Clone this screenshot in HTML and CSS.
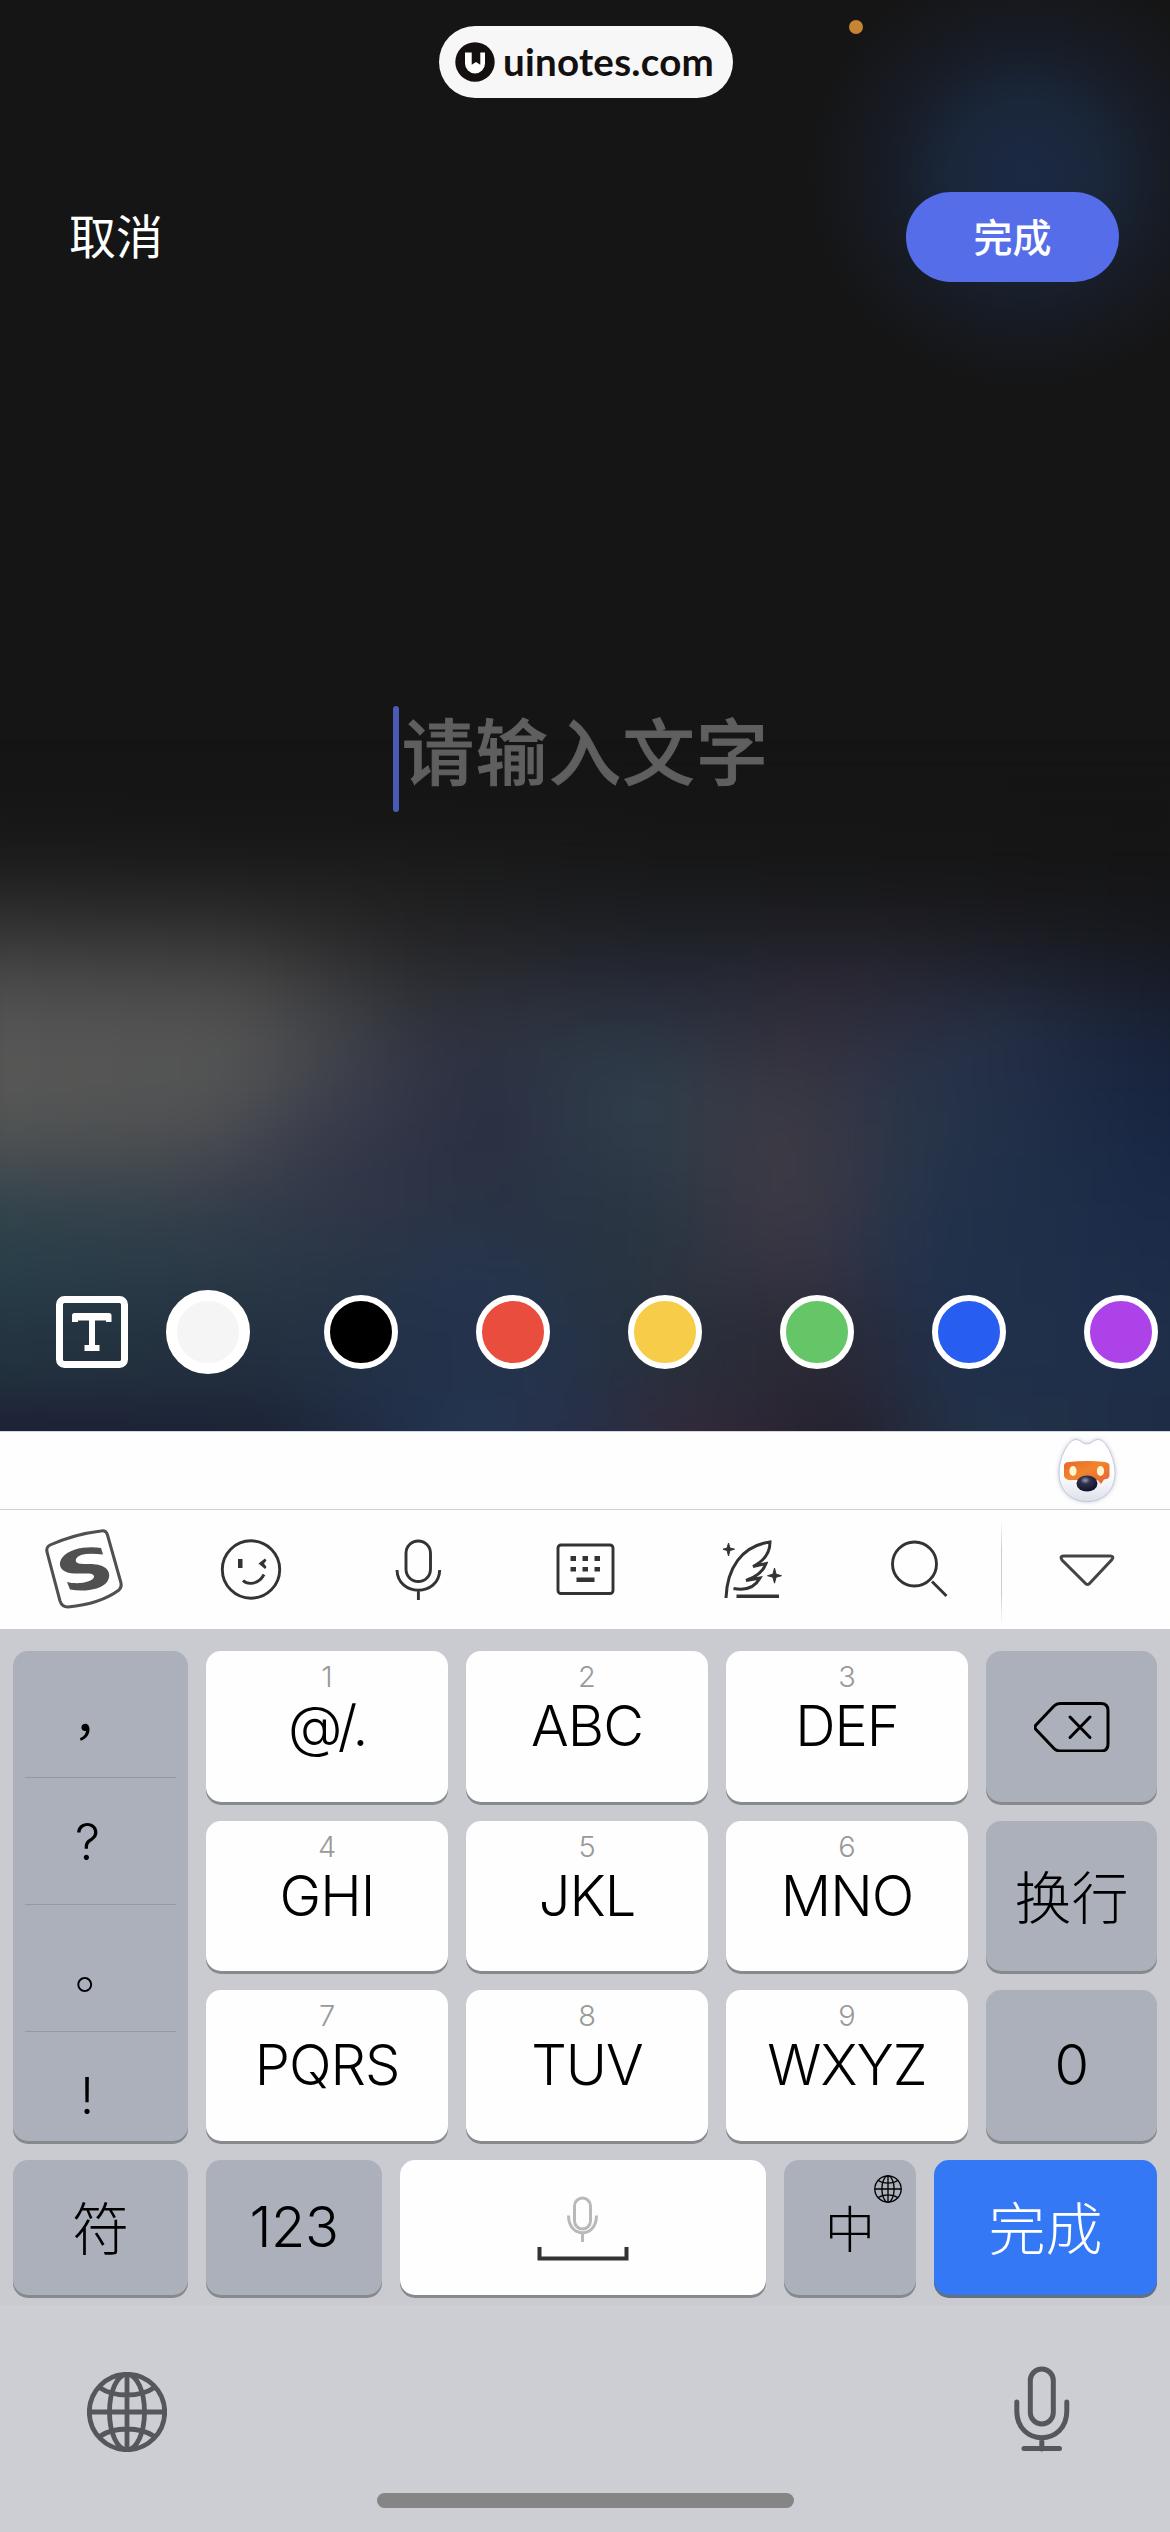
FILE: index.html
```html
<!DOCTYPE html>
<html lang="zh-CN">
<head>
<meta charset="utf-8">
<title>文字</title>
<link rel="stylesheet" href="styles.css">
</head>
<body>
<svg class="defs" width="0" height="0">
  <defs>
    <symbol id="globe" viewBox="0 0 80 80">
      <g fill="none" stroke="currentColor">
        <circle cx="40" cy="40" r="37.7"/>
        <ellipse cx="40" cy="40" rx="17.5" ry="37.7"/>
        <path d="M40 2V78M2 40H78M12.500 15.500C27 25.500 53 25.500 67.500 15.500M12.500 64.500C27 54.500 53 54.500 67.500 64.500"/>
      </g>
    </symbol>
  </defs>
</svg>
<main class="screen">
  <section class="editor">
    <div class="backdrop">
      <div class="glow"></div>
      <div class="mesh">
        <i class="m1"></i><i class="m2"></i><i class="m3"></i><i class="m4"></i><i class="m5"></i><i class="m6"></i><i class="m7"></i><i class="m8"></i><i class="m9"></i><i class="m10"></i><i class="m11"></i><i class="m12"></i>
      </div>
    </div>
    <div class="status">
      <div class="site">
        <svg width="40" height="40" viewBox="0 0 40 40"><circle cx="20" cy="20" r="19.700" fill="#14100f"/><path d="M10 10.500h6.700v12.300l4.300-2.700 4.300 2.700V10.500h4.700v11a10 10 0 0 1-20 0z" fill="#fff"/></svg>
        <span>uinotes.com</span>
      </div>
      <div class="rec-dot"></div>
    </div>
    <header class="actions">
      <span class="cancel">取消</span>
      <span class="done">完成</span>
    </header>
    <div class="field"><i class="caret"></i><span>请输入文字</span></div>
    <div class="palette">
      <svg class="tbox" width="72" height="72" viewBox="0 0 72 72"><rect x="3.500" y="3.500" width="65" height="65" rx="5" fill="none" stroke="#fff" stroke-width="7"/><path d="M18.500 17H53a2.500 2.500 0 0 1 2.500 2.500V26H50V24.500H39V49H43.500V55H28.500V49H33V24.500H22V26H16V19.500A2.500 2.500 0 0 1 18.500 17Z" fill="#fff"/></svg>
      <i class="dot white"></i><i class="dot black"></i><i class="dot red"></i><i class="dot yellow"></i><i class="dot green"></i><i class="dot blue"></i><i class="dot purple"></i>
    </div>
  </section>

  <section class="suggest">
    <svg width="66" height="72" viewBox="0 0 66 72">
      <defs>
        <linearGradient id="fur" x1="0" y1="0" x2="0" y2="1"><stop offset=".55" stop-color="#fff"/><stop offset="1" stop-color="#dde0ea"/></linearGradient>
        <linearGradient id="visor" x1="0" y1="0" x2="1" y2="1"><stop offset="0" stop-color="#e8672c"/><stop offset=".45" stop-color="#f0852e"/><stop offset="1" stop-color="#e5603a"/></linearGradient>
        <radialGradient id="nose" cx=".42" cy=".3" r=".65"><stop offset="0" stop-color="#9a9db0"/><stop offset=".35" stop-color="#30334e"/><stop offset="1" stop-color="#13142e"/></radialGradient>
      </defs>
      <path class="fox-head" d="M5 37C5 22 14 3.500 22 3.500C27 3.500 28 8 33 8S39 3.500 44 3.500C52 3.500 61 22 61 37C61 55 49 65.500 33 65.500S5 55 5 37Z" fill="url(#fur)" stroke="#c3c8da"/>
      <path d="M10 29Q11 26 15 26Q33 24 51 26Q55 27 55.500 29V40Q55 43 50 43.500L47 48L43.500 44H15Q11 43 10 40Z" fill="url(#visor)"/>
      <ellipse cx="19" cy="35" rx="3.600" ry="5" fill="#fff5d0"/><ellipse cx="46.500" cy="35" rx="3.600" ry="5" fill="#fff5d0"/>
      <ellipse cx="33" cy="47.500" rx="10.500" ry="8" fill="url(#nose)"/>
    </svg>
  </section>

  <nav class="toolbar">
    <svg class="cell" viewBox="0 0 167 119"><g fill="none" stroke="#505050" stroke-width="3"><path d="M50 35Q75 24 101 21Q106 20 107.500 25L121 73Q122 77 119 80Q100 94 68 97Q62 97 60 91L47 42Q46 37 50 35Z"/></g><path d="M101 38L103 44.500Q79 42 76 49C74 56 86 53 96 54.500C109 56 112 65 107 72C101 80 84 82 70 79.500L67 72C78 75 94 72 94 66.500C94 62 84 64 74 63.500C61 63 57 55 62 48C69 38 88 36 101 38Z" fill="#505050"/></svg>
    <svg class="cell" viewBox="0 0 167 119"><g fill="none" stroke="#333" stroke-width="2.900"><circle cx="84" cy="59.500" r="28.700"/><path d="M76 70.500C80 74.500 91 75.500 97 64.500"/></g><path d="M71 49h4.500v9H71zM98 48.500l-6.500 5 6.500 5.500 1.500-2-2.500-3.500 2.500-3z" fill="#333"/></svg>
    <svg class="cell" viewBox="0 0 167 119"><g fill="none" stroke="#333" stroke-width="2.900"><rect x="72" y="31" width="24.500" height="40.500" rx="12.250"/><path d="M63 60C63.700 87 105 87 105.700 60M84.400 81V90"/></g></svg>
    <svg class="cell" viewBox="0 0 167 119"><rect x="57" y="35" width="55" height="48.500" rx="3" fill="none" stroke="#333" stroke-width="2.900"/><path d="M69.500 46h5.500v5h-5.500zM81.500 46H87v5h-5.500zM93.500 46H99v5h-5.500zM69.500 57h5.500v4.500h-5.500zM81.500 57H87v4.500h-5.500zM93.500 57H99v4.500h-5.500zM75.500 67.500h18v4.500h-18z" fill="#333"/></svg>
    <svg class="cell" viewBox="0 0 167 119"><g fill="none" stroke="#333" stroke-width="3"><path d="M58 88C59 59 73 36 102 32C102 42 96 51 85 56.500L98 53.500C95 62 88 67 78 70.500L92 68C87 77 78 81 65.500 78.500"/><path d="M68.500 86.300H111" stroke-width="3.400"/></g><path d="M60.500 33l1.400 5 4.600 1.200-4.600 1.300-1.400 5.500-1.400-5.500L55 39.200l4.100-1.200zM106.500 58l1.600 6.200 5.400 1.500-5.400 1.500-1.600 6-1.600-6-5.400-1.500 5.400-1.500z" fill="#333" stroke="#333" stroke-width="1"/></svg>
    <svg class="cell" viewBox="0 0 167 119"><g fill="none" stroke="#333" stroke-width="2.900"><ellipse cx="79.500" cy="54" rx="22" ry="22"/><path d="M97 71.500L111.500 86"/></g></svg>
    <i class="divider"></i>
    <svg class="fold" viewBox="0 0 167 119"><path d="M61.500 46H108Q112.500 46 110 49.500L88 73Q85.500 76 83 73L60 50Q57.500 46 61.500 46Z" fill="none" stroke="#444" stroke-width="3"/></svg>
  </nav>

  <section class="keys">
    <div class="pad">
      <div class="key gray punct"><span class="comma">，</span><span>?</span><span class="stop">。</span><span>!</span></div>
      <div class="key"><small>1</small><b class="sym">@/.</b></div>
      <div class="key"><small>2</small><b>ABC</b></div>
      <div class="key"><small>3</small><b>DEF</b></div>
      <div class="key gray mid"><svg width="76" height="50" viewBox="0 0 76 50"><g fill="none" stroke="#000" stroke-width="3" stroke-linecap="round"><path d="M26 1.500H67Q74 1.500 74 8.500V42Q74 49 67 49H26Q22.500 49 20 46.500L2 27.500Q0 25.200 2 23L20 4Q22.500 1.500 26 1.500Z"/><path d="M36 15L56 35.500M56 15L36 35.500"/></g></svg></div>
      <div class="key"><small>4</small><b>GHI</b></div>
      <div class="key"><small>5</small><b>JKL</b></div>
      <div class="key"><small>6</small><b>MNO</b></div>
      <div class="key gray mid cjk">换行</div>
      <div class="key"><small>7</small><b>PQRS</b></div>
      <div class="key"><small>8</small><b>TUV</b></div>
      <div class="key"><small>9</small><b>WXYZ</b></div>
      <div class="key gray mid num">0</div>
    </div>
    <div class="last">
      <div class="key gray mid cjk">符</div>
      <div class="key gray mid num">123</div>
      <div class="key mid"><svg width="92" height="66" viewBox="0 0 92 66"><g fill="none" stroke="#b9b9b9" stroke-width="3"><rect x="37.500" y="3" width="16" height="31" rx="8"/><path d="M31.500 20.500C31.500 43.500 59.500 43.500 59.500 20.500M45.500 38V47"/></g><path d="M2.500 52V63.500H89.500V52" fill="none" stroke="#333" stroke-width="4"/></svg></div>
      <div class="key gray mid zh">中<svg class="mini" width="28" height="28"><use href="#globe"/></svg></div>
      <div class="key primary mid cjk">完成</div>
    </div>
  </section>

  <footer class="bottom">
    <div class="sys">
      <svg class="globe" width="80" height="80"><use href="#globe"/></svg>
      <svg width="56" height="86" viewBox="0 0 56 86"><g fill="none" stroke="#54575c" stroke-width="5" stroke-linecap="round"><rect x="16.300" y="3" width="23" height="55" rx="11.500"/><path d="M2.800 36V45C2.800 80.500 52.800 80.500 52.800 45V36M27.800 73V83M10 82.500H45.500"/></g></svg>
    </div>
    <div class="home"></div>
  </footer>
</main>
</body>
</html>
```
FILE: styles.css
```css
* { box-sizing: border-box; }
body { margin: 0; background: #151515; }
.defs { position: absolute; }
.screen {
  width: 1170px; height: 2532px; overflow: hidden;
  display: flex; flex-direction: column;
  font-family: Inter, "Noto Sans CJK SC", sans-serif;
}
i { display: block; font-style: normal; }
svg { display: block; }

/* Editor */
.editor { position: relative; height: 1431px; background: #151515; overflow: hidden; display: flex; flex-direction: column; isolation: isolate; }
.backdrop { position: absolute; inset: 0; z-index: -1; overflow: hidden; }
.glow { position: absolute; left: 805px; top: -40px; width: 440px; height: 430px; background: radial-gradient(closest-side, #1b2944 0, #1a2639 35%, #171b24 65%, #151515 100%); }
.mesh { position: absolute; left: -60px; top: 806px; width: 1290px; filter: blur(28px); }
.mesh i { height: 50px; }
.m1 { background: linear-gradient(90deg, #181818, #171717 40%, #151515); }
.m2 { background: linear-gradient(90deg, #212121 5%, #1f1f1f 30%, #191a1b 50%, #151517 95%); }
.m3 { background: linear-gradient(90deg, #343434 5%, #323232 22%, #232325 37%, #1e2026 55%, #1f1f26 73%, #16181d 95%); }
.m4 { background: linear-gradient(90deg, #4a4a4a 5%, #464646 23%, #2c2d31 37%, #252936 55%, #2a2834 71%, #202533 82%, #171c28 95%); }
.m5 { background: linear-gradient(90deg, #555555 5%, #525252 23%, #30333f 38%, #2a3442 54%, #322e3b 67%, #253046 82%, #182136 95%); }
.m6 { background: linear-gradient(90deg, #575756 5%, #535454 22%, #353847 35%, #2b3042 42%, #2f3d4a 54%, #383641 66%, #27334a 77%, #18243f 95%); }
.m7 { background: linear-gradient(90deg, #515353 5%, #4d4f52 20%, #363a4a 31%, #2a2f42 42%, #2f3d4a 54%, #3c3943 66%, #263449 77%, #182643 95%); }
.m8 { background: linear-gradient(90deg, #3d484d 5%, #3f464e 17%, #333848 30%, #293143 42%, #2b3846 54%, #3e3a44 66%, #24334a 77%, #192946 95%); }
.m9 { background: linear-gradient(90deg, #2d414a 5%, #303c49 20%, #2d3548 33%, #273345 45%, #2a3542 56%, #3c3743 66%, #23324a 76%, #1b2b48 95%); }
.m10 { background: linear-gradient(90deg, #283e49 5%, #2a3946 23%, #273445 33%, #253451 41%, #283440 53%, #363240 66%, #21314b 77%, #1d2d49 95%); }
.mesh .m11 { height: 90px; background: linear-gradient(90deg, #23343f 5%, #23303f 23%, #233249 37%, #25334b 48%, #27303b 56%, #2b2834 69%, #20304b 78%, #1f2e49 95%); }
.mesh .m12 { height: 200px; background: linear-gradient(90deg, #1d2036 5%, #1c2336 25%, #243552 41%, #272f48 50%, #33293a 58%, #25212e 70%, #223248 80%, #1e2d43 95%); }

.status { height: 124px; padding: 20px 0 0 439px; display: flex; gap: 116px; align-items: flex-start; }
.site { margin-top: 6px; width: 294px; height: 72px; border-radius: 36px; background: #f7f7f7; display: flex; align-items: center; padding-left: 16px; gap: 8px; color: #14100f; font: 700 38.500px/42px Lato, sans-serif; letter-spacing: .250px; }
.site span { margin-top: -3px; }
.rec-dot { width: 14px; height: 14px; border-radius: 50%; background: #c78533; }
.actions { padding: 68px 51px 0 69px; height: 158px; display: flex; justify-content: space-between; align-items: center; color: #fff; }
.cancel { font-size: 47px; line-height: 90px; }
.done { width: 213px; height: 90px; border-radius: 45px; background: #566de9; text-align: center; font-size: 39px; font-weight: 500; line-height: 91px; }
.field { margin: 424px 0 0 393px; height: 106px; display: flex; color: #5f5f5f; font-size: 72px; font-weight: 500; -webkit-text-stroke: .900px #5f5f5f; letter-spacing: 1.500px; line-height: 93px; }
.caret { width: 6px; height: 106px; border-radius: 3px; background: #4a5bb5; margin-right: 3px; }
.palette { margin-top: 478px; padding-left: 56px; height: 84px; display: flex; align-items: center; }
.tbox { flex: none; }
.dot { flex: none; width: 74px; height: 74px; border-radius: 50%; border: 6px solid #fff; margin-right: 78px; }
.dot.white { width: 84px; height: 84px; border-width: 11px; background: #f5f5f5; margin: 0 74px 0 38px; }
.black { background: #000; }
.red { background: #e94d3e; }
.yellow { background: #f6cc48; }
.green { background: #65c667; }
.blue { background: #275ef1; }
.purple { background: #ac42e8; margin-right: 0; }

/* Keyboard head */
.suggest { height: 79px; background: #fefefe; border-top: 1px solid #d5d6e4; border-bottom: 1px solid #cfcfcf; padding: 4px 0 0 1054px; }
.fox-head { filter: drop-shadow(0 0 2px #c9cdda); }
.toolbar { height: 119px; background: #fefefe; display: flex; }
.cell { width: 167px; height: 119px; flex: none; }
.divider { width: 1px; height: 106px; margin-top: 9px; margin-left: -1px; background: linear-gradient(transparent, #ccc 30%, #ccc 70%, transparent); }
.fold { width: 167px; height: 119px; flex: none; }

/* Keys */
.keys { height: 676px; padding: 22px 13px 0; background: #cacbd0; display: flex; flex-direction: column; gap: 19px; }
.pad { display: grid; grid-template-columns: 175px 242px 242px 242px 171px; grid-template-rows: 151px 150px 151px; gap: 19px 18px; }
.last { display: grid; grid-template-columns: 175px 176px 366px 132px 223px; grid-template-rows: 135px; column-gap: 18px; }
.key { background: #fefefe; border-radius: 15px; box-shadow: 0 3px 0 #868a8d; color: #000; display: flex; flex-direction: column; align-items: center; padding-top: 11px; font-weight: 300; }
.key small { font-size: 29px; line-height: 30px; color: #999; }
.key b { font-size: 56px; line-height: 60px; margin-top: 4px; font-weight: 300; letter-spacing: -1px; }
.key .sym { letter-spacing: -2.500px; }
.gray { background: #abb0bb; }
.primary { background: #3478f6; color: #fff; box-shadow: 0 3px 0 #64707c; }
.mid { justify-content: center; padding: 0; }
.cjk { font-family: "Noto Sans CJK SC", sans-serif; font-size: 57px; line-height: 76px; padding-bottom: 5px; }
.num { font-size: 56px; padding-bottom: 1px; letter-spacing: -.500px; }
.punct { grid-row: span 3; padding: 0 12px; align-items: stretch; font-size: 50px; }
.punct span { height: 127px; flex: none; padding: 34px 0 0 50px; line-height: 60px; border-bottom: 1px solid #9699a0; }
.punct span:last-child { border: 0; height: 109px; padding: 34px 0 0 55px; }
.punct .comma, .punct .stop { font-family: "Noto Sans CJK SC", sans-serif; padding-top: 32px; }
.punct .comma { font-weight: 400; padding-left: 48px; }
.zh { position: relative; font: 300 50px/76px "Noto Sans CJK SC", sans-serif; padding-bottom: 3px; }
.mini { position: absolute; right: 14px; top: 15px; stroke-width: 3.800px; }

/* System row */
.bottom { height: 227px; background: #cdced3; display: flex; flex-direction: column; align-items: center; }
.sys { width: 100%; height: 188px; padding: 61px 100px 0 87px; display: flex; justify-content: space-between; }
.globe { margin-top: 6px; color: #54575c; stroke-width: 4.800px; }
.home { width: 417px; height: 15px; border-radius: 8px; background: #848584; }
```
